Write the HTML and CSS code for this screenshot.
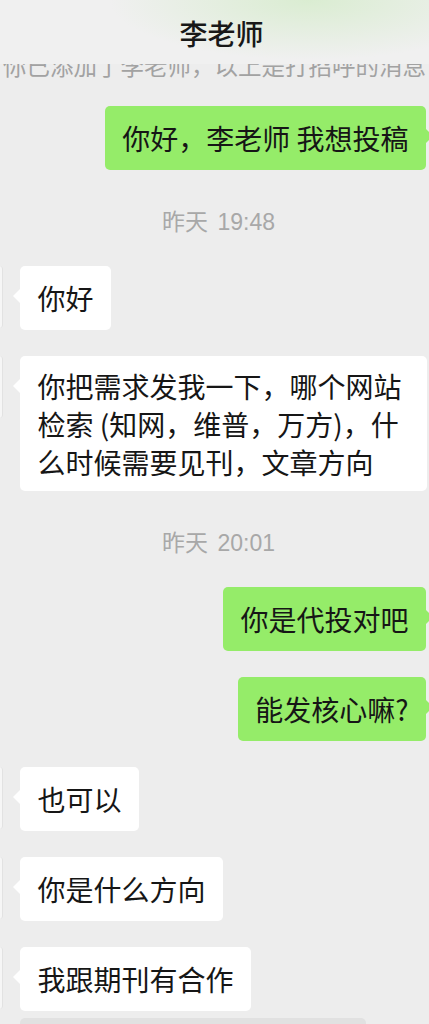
FILE: index.html
```html
<!DOCTYPE html>
<html lang="zh-CN">
<head>
<meta charset="utf-8">
<title>李老师</title>
<link rel="stylesheet" href="styles.css">
</head>
<body>
<div class="phone">
  <header class="topbar"><span class="title">李老师</span></header>
  <main class="chat">
    <div class="sys">你已添加了李老师，以上是打招呼的消息</div>
    <div class="row row--me"><div class="bubble bubble--me">你好，李老师 我想投稿</div></div>
    <div class="time">昨天 19:48</div>
    <div class="row row--peer"><div class="avatar"></div><div class="bubble bubble--peer">你好</div></div>
    <div class="row row--peer"><div class="avatar"></div><div class="bubble bubble--peer bubble--multi">你把需求发我一下，哪个网站<br>检索 (知网，维普，万方)，什<br>么时候需要见刊，文章方向</div></div>
    <div class="time">昨天 20:01</div>
    <div class="row row--me"><div class="bubble bubble--me">你是代投对吧</div></div>
    <div class="row row--me"><div class="bubble bubble--me">能发核心嘛?</div></div>
    <div class="row row--peer"><div class="avatar"></div><div class="bubble bubble--peer">也可以</div></div>
    <div class="row row--peer"><div class="avatar"></div><div class="bubble bubble--peer">你是什么方向</div></div>
    <div class="row row--peer"><div class="avatar"></div><div class="bubble bubble--peer">我跟期刊有合作</div></div>
    <div class="quote"></div>
  </main>
</div>
</body>
</html>
```
FILE: styles.css
```css
html, body {
  margin: 0;
  padding: 0;
  background: #ededed;
}
body {
  width: 429px;
  height: 1024px;
  overflow: hidden;
  font-family: "Noto Sans CJK SC", "Noto Sans", sans-serif;
  color: #191919;
}
.phone {
  position: relative;
  width: 429px;
  height: 1024px;
  overflow: hidden;
  background: #ededed;
}
.topbar {
  position: absolute;
  top: 0;
  left: 0;
  right: 0;
  height: 64px;
  z-index: 2;
  display: flex;
  align-items: center;
  justify-content: center;
  padding-left: 14px;
  background:
    radial-gradient(ellipse 200px 60px at 72% 0%, rgba(214, 236, 204, 0.85), rgba(240, 240, 240, 0) 100%),
    #f0f0f0;
}
.title {
  font-size: 28px;
  font-weight: 500;
  line-height: 64px;
  color: #181818;
  padding-top: 2px;
}
.chat {
  display: flex;
  flex-direction: column;
  gap: 26px;
  padding-top: 50px;
}
.sys {
  height: 30px;
  line-height: 30px;
  font-size: 23.5px;
  text-align: center;
  white-space: nowrap;
  color: #a2a2a2;
}
.row {
  display: flex;
  align-items: flex-start;
}
.row--me {
  justify-content: flex-end;
  padding-right: 3px;
}
.avatar {
  width: 3px;
  height: 62px;
  margin-right: 17px;
  flex: none;
  background: #f6f6f6;
  border-radius: 0 3px 3px 0;
  box-shadow: inset -1px 0 0 #e2e2e2;
}
.bubble {
  position: relative;
  font-size: 28px;
  line-height: 38px;
  padding: 13px 17.5px;
  border-radius: 5px;
  color: #161616;
  box-sizing: border-box;
}
.bubble::before {
  content: "";
  position: absolute;
  top: 23px;
  width: 0;
  height: 0;
  border-top: 7px solid transparent;
  border-bottom: 7px solid transparent;
}
.bubble--me {
  background: #95ec69;
}
.bubble--me::before {
  right: -7px;
  border-left: 7px solid #95ec69;
}
.bubble--peer {
  background: #ffffff;
  max-width: 407px;
}
.bubble--peer::before {
  left: -7px;
  border-right: 7px solid #ffffff;
}
.bubble--multi {
  padding: 10.5px 17.5px;
  width: 407px;
}
.time {
  height: 24px;
  line-height: 24px;
  margin: 14px 0 6px;
  padding-left: 8px;
  font-family: "Liberation Sans", "Noto Sans CJK SC", sans-serif;
  font-size: 23px;
  word-spacing: 3px;
  text-align: center;
  color: #a8a8a8;
}
.quote {
  margin-top: -19px;
  margin-left: 20px;
  width: 346px;
  height: 30px;
  border-radius: 5px;
  background: #e1e1e1;
}
```
